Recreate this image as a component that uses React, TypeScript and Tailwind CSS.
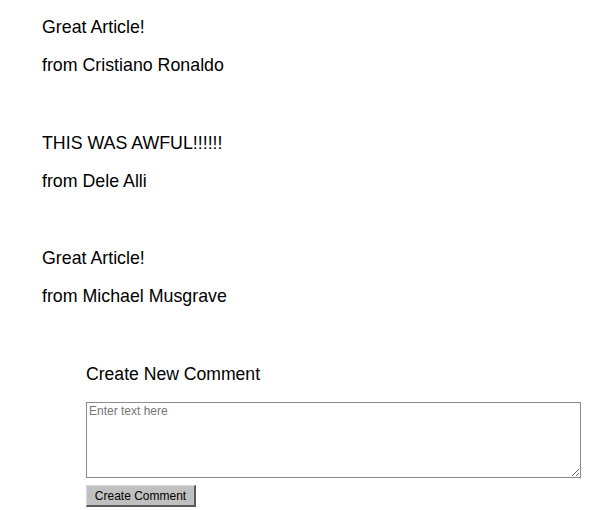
const comments = [
  { id: 1, body: "Great Article!", author: "Cristiano Ronaldo" },
  { id: 2, body: "THIS WAS AWFUL!!!!!!", author: "Dele Alli" },
  { id: 3, body: "Great Article!", author: "Michael Musgrave" },
];

export default function App() {
  return (
    <div className="min-h-[510px] bg-white pl-[42px] pt-[18px] font-['Liberation_Sans',Arial,sans-serif] text-black">
      <div className="flex flex-col gap-[59.5px]">
        {comments.map((comment) => (
          <div key={comment.id} className="flex flex-col gap-[20px] text-[17.8px] leading-[18px]">
            <p>{comment.body}</p>
            <p>from {comment.author}</p>
          </div>
        ))}
      </div>

      <div className="mt-[59px] pl-[44px]">
        <h2 className="text-[17.6px] leading-[20px]">Create New Comment</h2>
        <textarea
          placeholder="Enter text here"
          className="mt-[18px] block h-[76px] w-[495px] border border-[#8a8a8a] px-[2px] py-[1px] text-[12px] leading-[14px] placeholder:text-[#757575]"
        />
        <button className="mt-[7px] h-[22px] w-[110px] border border-t-[#dadada] border-l-[#dadada] border-r-[#5a5a5a] border-b-[#5a5a5a] border-r-2 border-b-2 bg-[#c0c0c0] text-[12px] leading-[14px]">
          Create Comment
        </button>
      </div>
    </div>
  );
}
